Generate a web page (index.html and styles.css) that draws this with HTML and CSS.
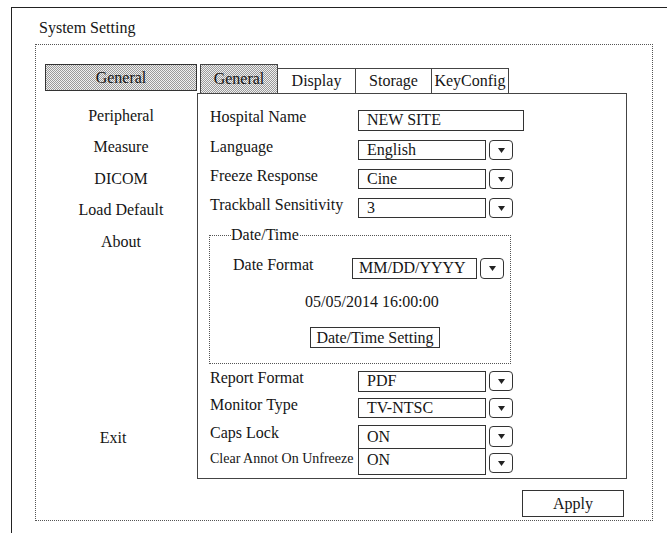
FILE: index.html
```html
<!DOCTYPE html>
<html>
<head>
<meta charset="utf-8">
<title>System Setting</title>
<link rel="stylesheet" href="styles.css">
</head>
<body>
<div class="window">
  <div class="title">System Setting</div>
  <div class="frame">
    <nav class="menu">
      <div class="menu-item active">General</div>
      <div class="menu-item">Peripheral</div>
      <div class="menu-item">Measure</div>
      <div class="menu-item">DICOM</div>
      <div class="menu-item">Load Default</div>
      <div class="menu-item">About</div>
      <div class="menu-item exit">Exit</div>
    </nav>
    <div class="main">
      <div class="tabs">
        <div class="tab active t1">General</div>
        <div class="tab t2">Display</div>
        <div class="tab t3">Storage</div>
        <div class="tab t4">KeyConfig</div>
      </div>
      <div class="panel">
        <div class="row r-hosp"><span class="label">Hospital Name</span><span class="field wide">NEW SITE</span></div>
        <div class="row r-lang"><span class="label">Language</span><span class="field">English</span><span class="drop"><svg width="7" height="5" viewBox="0 0 7 5"><polygon points="0,0 7,0 3.5,5" fill="#222"/></svg></span></div>
        <div class="row r-freeze"><span class="label">Freeze Response</span><span class="field">Cine</span><span class="drop"><svg width="7" height="5" viewBox="0 0 7 5"><polygon points="0,0 7,0 3.5,5" fill="#222"/></svg></span></div>
        <div class="row r-track"><span class="label">Trackball Sensitivity</span><span class="field">3</span><span class="drop"><svg width="7" height="5" viewBox="0 0 7 5"><polygon points="0,0 7,0 3.5,5" fill="#222"/></svg></span></div>
        <fieldset class="datetime">
          <legend>Date/Time</legend>
          <div class="row r-datefmt"><span class="label dt-label">Date Format</span><span class="field dt-field">MM/DD/YYYY</span><span class="drop"><svg width="7" height="5" viewBox="0 0 7 5"><polygon points="0,0 7,0 3.5,5" fill="#222"/></svg></span></div>
          <div class="now">05/05/2014 16:00:00</div>
          <button class="dt-btn">Date/Time Setting</button>
        </fieldset>
        <div class="row r-report"><span class="label">Report Format</span><span class="field">PDF</span><span class="drop"><svg width="7" height="5" viewBox="0 0 7 5"><polygon points="0,0 7,0 3.5,5" fill="#222"/></svg></span></div>
        <div class="row r-monitor"><span class="label">Monitor Type</span><span class="field">TV-NTSC</span><span class="drop"><svg width="7" height="5" viewBox="0 0 7 5"><polygon points="0,0 7,0 3.5,5" fill="#222"/></svg></span></div>
        <div class="row r-caps"><span class="label">Caps Lock</span><span class="field">ON</span><span class="drop"><svg width="7" height="5" viewBox="0 0 7 5"><polygon points="0,0 7,0 3.5,5" fill="#222"/></svg></span></div>
        <div class="row r-clear"><span class="label small">Clear Annot On Unfreeze</span><span class="field">ON</span><span class="drop"><svg width="7" height="5" viewBox="0 0 7 5"><polygon points="0,0 7,0 3.5,5" fill="#222"/></svg></span></div>
      </div>
      <div class="actions"><button class="apply">Apply</button></div>
    </div>
  </div>
</div>
</body>
</html>
```
FILE: styles.css
```css
html, body {
  margin: 0;
  padding: 0;
  background: #fff;
  overflow: hidden;
}
body {
  font-family: "Liberation Serif", "Times New Roman", serif;
  font-size: 16px;
  color: #151515;
}
.window {
  margin: 7px 0 0 11px;
  width: 656px;
  height: 526px;
  box-sizing: border-box;
  border-top: 1px solid #222;
  border-left: 1px solid #222;
}
.title {
  padding: 11px 0 0 27px;
  line-height: 18px;
}
.frame {
  margin: 7px 0 0 23px;
  width: 618px;
  height: 477px;
  box-sizing: border-box;
  border: 1px dotted #555;
  padding: 19px 25px 0 9px;
  display: flex;
}
.menu {
  width: 152px;
  display: flex;
  flex-direction: column;
}
.menu-item {
  height: 31.5px;
  display: flex;
  align-items: center;
  justify-content: center;
  line-height: 18px;
  flex: none;
}
.menu-item.active {
  height: 27px;
  box-sizing: border-box;
  border: 1px solid #333;
  margin-bottom: 9px;
  background: repeating-conic-gradient(#9a9a9a 0 25%, #f0f0f0 0 50%) 0 0 / 2px 2px;
}
.menu-item.exit {
  margin-top: 165px;
  padding-right: 16px;
}
.main {
  width: 430px;
  display: flex;
  flex-direction: column;
}
.tabs {
  display: flex;
  align-items: flex-end;
  height: 29px;
  margin-left: 3px;
}
.tab {
  height: 25px;
  box-sizing: border-box;
  border: 1px solid #444;
  border-bottom: none;
  margin-left: -1px;
  display: flex;
  align-items: center;
  justify-content: center;
  line-height: 18px;
}
.tab.active {
  height: 29px;
  background: repeating-conic-gradient(#9a9a9a 0 25%, #f0f0f0 0 50%) 0 0 / 2px 2px;
}
.t1 { width: 78px; margin-left: 0; }
.t2 { width: 79px; }
.t3 { width: 77px; }
.t4 { width: 78px; }
.panel {
  height: 386px;
  box-sizing: border-box;
  border: 1px solid #444;
  padding: 0 0 0 12px;
  display: flex;
  flex-direction: column;
}
.row {
  display: flex;
  align-items: flex-start;
  height: 20px;
  flex: none;
}
.label {
  width: 148px;
  line-height: 18px;
  margin-top: -2px;
  white-space: nowrap;
  flex: none;
}
.label.small {
  font-size: 14px;
}
.field {
  box-sizing: border-box;
  width: 128px;
  height: 100%;
  border: 1px solid #333;
  padding-left: 8px;
  line-height: 18px;
  white-space: nowrap;
  flex: none;
}
.field.wide {
  width: 166px;
}
.drop {
  box-sizing: border-box;
  margin-left: 3px;
  width: 24px;
  height: 20px;
  border: 1px solid #333;
  border-radius: 4px;
  display: flex;
  align-items: center;
  justify-content: center;
  flex: none;
}
.r-hosp { margin-top: 16px; height: 21px; }
.r-lang { margin-top: 9px; }
.r-freeze { margin-top: 9px; }
.r-track { margin-top: 9px; }
.datetime {
  margin: 9px 0 0 -1px;
  padding: 0;
  width: 302px;
  height: 137px;
  box-sizing: border-box;
  border: 1px dotted #555;
  min-width: 0;
}
.datetime legend {
  margin-left: 21px;
  padding: 0;
  line-height: 16px;
}
.r-datefmt {
  margin-top: 15px;
  padding-left: 23px;
  height: 21px;
}
.dt-label {
  width: 119px;
}
.dt-field {
  width: 125px;
  padding-left: 6px;
}
.r-datefmt .drop {
  height: 21px;
}
.now {
  margin: 14px 0 0 95px;
  line-height: 18px;
}
.dt-btn {
  display: block;
  margin: 16px 0 0 100px;
  width: 130px;
  height: 21px;
  padding: 0;
  box-sizing: border-box;
  border: 1px solid #333;
  background: #fff;
  font: 16px/18px "Liberation Serif", "Times New Roman", serif;
  color: #151515;
}
.r-report { margin-top: 7px; height: 21px; }
.r-monitor { margin-top: 6px; }
.r-caps { margin-top: 7px; height: 24px; }
.r-caps .drop { margin-top: 1px; height: 21px; }
.r-caps .label { margin-top: -1px; }
.r-clear { margin-top: -1px; height: 27px; }
.r-clear .drop { margin-top: 5px; height: 20px; }
.r-clear .label { margin-top: 2px; }
.r-clear .field, .r-caps .field { padding-top: 2px; }
.actions {
  display: flex;
  justify-content: flex-end;
  margin-top: 11px;
  padding-right: 3px;
}
.apply {
  width: 102px;
  height: 27px;
  padding: 0;
  box-sizing: border-box;
  border: 1px solid #333;
  background: #fff;
  font: 16px/18px "Liberation Serif", "Times New Roman", serif;
  color: #151515;
}
```
